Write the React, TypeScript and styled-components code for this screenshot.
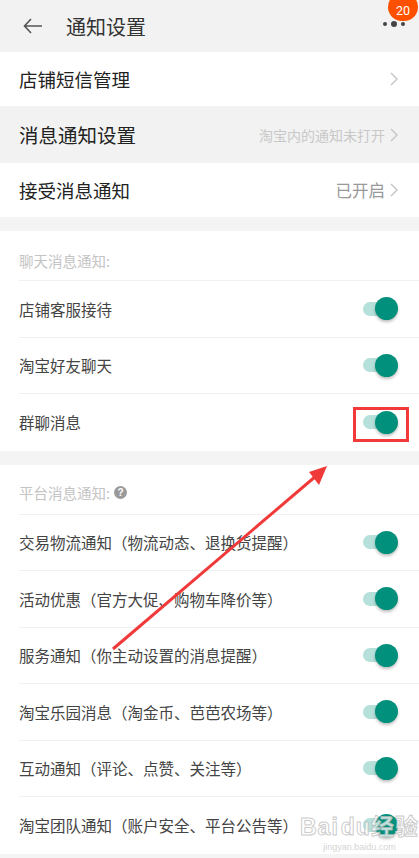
import styled, { createGlobalStyle } from "styled-components";

const GlobalStyle = createGlobalStyle`
    html, body {
        margin: 0;
        padding: 0;
        background: #f4f4f4;
    }
    body {
        font-family: "Noto Sans CJK SC", "Noto Sans", sans-serif;
        overflow: hidden;
    }
`

const chatItems = ["店铺客服接待", "淘宝好友聊天", "群聊消息"];

const platformItems = [
    "交易物流通知（物流动态、退换货提醒）",
    "活动优惠（官方大促、购物车降价等）",
    "服务通知（你主动设置的消息提醒）",
    "淘宝乐园消息（淘金币、芭芭农场等）",
    "互动通知（评论、点赞、关注等）",
    "淘宝团队通知（账户安全、平台公告等）",
];

const Chevron = () => (
    <svg width="8" height="14" viewBox="0 0 8 14">
        <polyline points="1,1 7,7 1,13" fill="none" stroke="#c4c4c4" strokeWidth="1.4" />
    </svg>
)

export default function App() {
    return (
        <Page>
            <GlobalStyle />
            <Header>
                <svg width="20" height="16" viewBox="0 0 20 16">
                    <path d="M19 8H2M8 1L1.5 8L8 15" fill="none" stroke="#555" strokeWidth="1.6" />
                </svg>
                <Title>通知设置</Title>
                <More>
                    <Dot size={4} />
                    <Dot size={6} />
                    <Dot size={4} />
                    <Badge>20</Badge>
                </More>
            </Header>

            <NavRow>
                <NavLabel>店铺短信管理</NavLabel>
                <Chevron />
            </NavRow>
            <NavRow pressed>
                <NavLabel big>消息通知设置</NavLabel>
                <NavValue light>淘宝内的通知未打开</NavValue>
                <Chevron />
            </NavRow>
            <NavRow>
                <NavLabel>接受消息通知</NavLabel>
                <NavValue>已开启</NavValue>
                <Chevron />
            </NavRow>

            <Section>
                <SectionTitle shift={10}>聊天消息通知:</SectionTitle>
                {chatItems.map((label, i) => (
                    <SwitchRow key={label} last={i === chatItems.length - 1}>
                        <RowLabel>{label}</RowLabel>
                        <Toggle marked={label === "群聊消息"}>
                            <Knob />
                        </Toggle>
                    </SwitchRow>
                ))}
            </Section>

            <Section>
                <SectionTitle shift={6}>
                    平台消息通知:
                    <Help>?</Help>
                </SectionTitle>
                {platformItems.map((label, i) => (
                    <SwitchRow key={label} last={i === platformItems.length - 1}>
                        <RowLabel>{label}</RowLabel>
                        <Toggle>
                            <Knob />
                        </Toggle>
                    </SwitchRow>
                ))}
            </Section>

            <Watermark>
                <WaterLogo>Bai<span>du</span>经验</WaterLogo>
                <WaterUrl>jingyan.baidu.com</WaterUrl>
            </Watermark>

            <Arrow width="419" height="858" viewBox="0 0 419 858">
                <line x1="113" y1="649" x2="316" y2="476" stroke="#f03a3a" strokeWidth="3" />
                <polygon points="327,466 309,472 319,485" fill="#f03a3a" />
            </Arrow>
        </Page>
    )
}

const Page = styled.div`
    position: relative;
    width: 419px;
    height: 858px;
    overflow: hidden;
    background: #f4f4f4;
`

const Header = styled.div`
    height: 52px;
    display: flex;
    align-items: center;
    padding: 0 14px 0 23px;
    background: #f2f2f2;
    box-sizing: border-box;
`

const Title = styled.div`
    margin-left: 23px;
    font-size: 20px;
    color: #333;
    flex: 1;
`

const More = styled.div`
    position: relative;
    display: flex;
    align-items: center;
    gap: 4px;
    margin-top: -4px;
`

const Dot = styled.span<{ size: number }>`
    width: ${p => p.size}px;
    height: ${p => p.size}px;
    border-radius: 50%;
    background: #444;
`

const Badge = styled.span`
    position: absolute;
    left: 5px;
    top: -28px;
    width: 30px;
    height: 28px;
    border-radius: 14px;
    background: #ff5000;
    color: #fff;
    font-family: "Roboto", "Liberation Sans", sans-serif;
    font-size: 12.5px;
    display: flex;
    align-items: flex-end;
    justify-content: center;
    padding-bottom: 3px;
    box-sizing: border-box;
`

const NavRow = styled.div<{ pressed?: boolean }>`
    height: ${p => p.pressed ? 57 : 54}px;
    display: flex;
    align-items: center;
    gap: 5px;
    padding: 0 21px 0 19px;
    background: ${p => p.pressed ? "#f2f2f2" : "#fff"};
`

const NavLabel = styled.div<{ big?: boolean }>`
    flex: 1;
    font-size: ${p => p.big ? 19.5 : 18.5}px;
    color: #222;
`

const NavValue = styled.div<{ light?: boolean }>`
    font-size: ${p => p.light ? 14 : 16.5}px;
    color: ${p => p.light ? "#c8c8c8" : "#999"};
`

const Section = styled.div`
    margin-top: 14px;
    background: #fff;
    padding-left: 19px;
`

const SectionTitle = styled.div<{ shift: number }>`
    height: 50px;
    box-sizing: border-box;
    padding-top: ${p => p.shift}px;
    display: flex;
    align-items: center;
    gap: 4px;
    font-size: 14.5px;
    color: #c4c4c4;
    border-bottom: 1px solid #f0f0f0;
`

const Help = styled.span`
    width: 13px;
    height: 13px;
    border-radius: 50%;
    background: #9a9a9a;
    color: #fff;
    font-size: 10px;
    font-weight: bold;
    line-height: 13px;
    text-align: center;
    font-family: "Liberation Sans", sans-serif;
`

const SwitchRow = styled.div<{ last?: boolean }>`
    height: 56.5px;
    box-sizing: border-box;
    display: flex;
    align-items: center;
    padding-right: 21px;
    border-bottom: ${p => p.last ? "none" : "1px solid #f0f0f0"};
`

const RowLabel = styled.div`
    flex: 1;
    font-size: 15.5px;
    color: #444;
    white-space: nowrap;
`

const Toggle = styled.div<{ marked?: boolean }>`
    position: relative;
    width: 35px;
    height: 23px;
    display: flex;
    align-items: center;

    &::before {
        content: "";
        width: 28px;
        height: 14px;
        border-radius: 7px;
        background: #b6e0da;
    }

    &::after {
        content: "";
        display: ${p => p.marked ? "block" : "none"};
        position: absolute;
        inset: -4px -11px -8px -10px;
        border: 3px solid #f23a3a;
    }
`

const Knob = styled.span`
    position: absolute;
    right: 0;
    top: 0;
    width: 23px;
    height: 23px;
    border-radius: 50%;
    background: #00907c;
    box-shadow: 0 2px 3px rgba(0, 0, 0, 0.25);
`

const Watermark = styled.div`
    position: absolute;
    left: 300px;
    top: 808px;
    display: flex;
    flex-direction: column;
    align-items: center;
    pointer-events: none;
`

const WaterLogo = styled.div`
    font-family: "Liberation Sans", "Noto Sans CJK SC", sans-serif;
    font-size: 23px;
    font-weight: bold;
    color: rgba(255, 255, 255, 0.75);
    -webkit-text-stroke: 1px rgba(180, 180, 180, 0.7);
    letter-spacing: 1px;

    span {
        margin-left: 2px;
    }
`

const WaterUrl = styled.div`
    font-family: "Liberation Sans", sans-serif;
    font-size: 9px;
    color: rgba(200, 200, 200, 0.8);
`

const Arrow = styled.svg`
    position: absolute;
    left: 0;
    top: 0;
    pointer-events: none;
`
